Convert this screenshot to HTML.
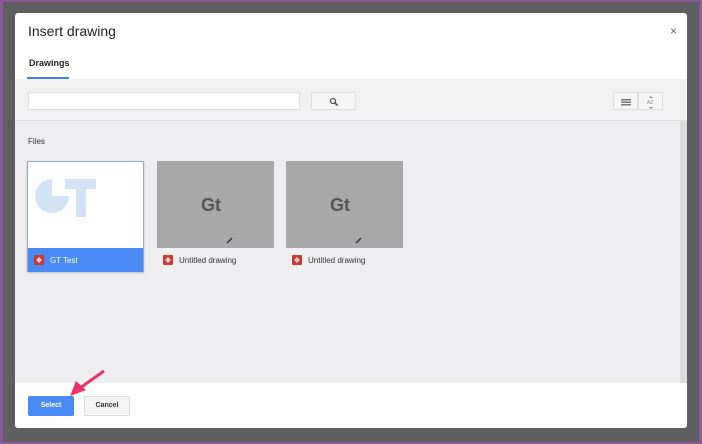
<!DOCTYPE html>
<html><head><style>
*{margin:0;padding:0;box-sizing:border-box}
body{width:702px;height:444px;overflow:hidden;background:#8a5b9a;font-family:"Liberation Sans",Arial,sans-serif;position:relative}
.bg{position:absolute;left:3px;top:2px;width:696px;height:440px;background:#5f5f5f}
.dlg{position:absolute;left:15px;top:13px;width:672px;height:415px;background:#fff;border-radius:3px;overflow:hidden}
.title{position:absolute;left:13px;top:10px;font-size:14px;color:#222}
.x{position:absolute;right:10px;top:11px;font-size:12px;color:#666}
.tab{position:absolute;left:14px;top:45px;font-size:9px;font-weight:bold;color:#222}
.tabline{position:absolute;left:12px;top:64px;width:42px;height:2px;background:#4a7fdc}
.toolbar{position:absolute;left:0;top:66px;width:672px;height:42px;background:#f1f1f1;border-bottom:1px solid #e0e0e0}
.search{position:absolute;left:13px;top:13px;width:272px;height:18px;background:#fff;border:1px solid #ddd;border-radius:2px}
.sbtn{position:absolute;left:296px;top:13px;width:45px;height:18px;background:#f5f5f5;border:1px solid #ddd;border-radius:2px}
.vb{position:absolute;top:13px;width:25px;height:18px;background:#f5f5f5;border:1px solid #ddd}
.content{position:absolute;left:0;top:108px;width:665px;height:262px;background:#eeedf0}
.scroll{position:absolute;left:665px;top:108px;width:7px;height:262px;background:#dcdcdc}
.files{position:absolute;left:13px;top:124px;font-size:8px;color:#333}
.card{position:absolute;top:148px;width:117px;height:111px}
.thumb{position:absolute;left:0;top:0;width:117px;height:87px;background:#a8a8a8}
.lbl{position:absolute;left:0;top:87px;width:117px;height:24px;font-size:8px;color:#333;padding:8px 0 0 22px}
.ic{position:absolute;left:6px;top:7px;width:10px;height:10px;background:#c63a3a;border-radius:1px}
.ic:after{content:"";position:absolute;left:2px;top:2px;width:6px;height:6px;background:#f3c9c9;transform:rotate(45deg) scale(.7)}
.footer{position:absolute;left:0;top:370px;width:672px;height:45px;background:#fff}
.sel{position:absolute;left:13px;top:383px;width:46px;height:20px;background:#4a8af4;color:#fff;font-size:7px;font-weight:bold;text-align:center;line-height:20px;border-radius:2px}
.can{position:absolute;left:69px;top:383px;width:46px;height:20px;background:#f5f5f5;border:1px solid #ddd;color:#333;font-size:7px;font-weight:bold;text-align:center;line-height:18px;border-radius:2px}
</style></head><body>
<div class="bg"></div>
<div class="dlg">
<div class="title">Insert drawing</div>
<div class="x">×</div>
<div class="tab">Drawings</div>
<div class="toolbar">
<div class="search"></div>
<div class="sbtn"><svg width="45" height="18"><circle cx="21" cy="8" r="2.5" fill="none" stroke="#555" stroke-width="1.3"/><line x1="23" y1="10" x2="25.5" y2="12.5" stroke="#555" stroke-width="1.6"/></svg></div>
<div class="vb" style="left:598px"><svg width="25" height="18"><rect x="7" y="6" width="10" height="1.5" fill="#777"/><rect x="7" y="8.5" width="10" height="1.5" fill="#777"/><rect x="7" y="11" width="10" height="1.5" fill="#777"/></svg></div>
<div class="vb" style="left:623px"><svg width="25" height="18"><text x="8" y="11" font-size="5" fill="#888" font-family="Liberation Sans">AZ</text><path d="M12 3l-2 2h4zM12 16l-2-2h4z" fill="#888"/></svg></div>
</div>
<div class="tabline"></div>
<div class="content"></div>
<div class="scroll"></div>
<div class="files">Files</div>
<div class="card" style="left:12px;border:1px solid #9aa8c8;box-shadow:0 1px 2px rgba(0,0,0,.2)">
<div class="thumb" style="background:#fff;width:115px">
<svg width="115" height="87"><path d="M24 17 A17 17 0 1 0 41 34 L24 34 Z" fill="#d4e3f3"/><rect x="37" y="17" width="31" height="10" fill="#d4e3f3"/><rect x="48" y="17" width="10" height="38" fill="#d4e3f3"/></svg>
</div>
<div class="lbl" style="background:#4a8af4;color:#fff;width:115px;top:86px"><div class="ic"></div>GT Test</div>
</div>
<div class="card" style="left:142px"><div class="thumb"><svg width="117" height="87"><text x="44" y="50" font-size="18" font-weight="bold" fill="#555" font-family="Liberation Sans">Gt</text><line x1="70" y1="82" x2="75" y2="77" stroke="#333" stroke-width="1.5"/></svg></div><div class="lbl"><div class="ic"></div>Untitled drawing</div></div>
<div class="card" style="left:271px"><div class="thumb"><svg width="117" height="87"><text x="44" y="50" font-size="18" font-weight="bold" fill="#555" font-family="Liberation Sans">Gt</text><line x1="70" y1="82" x2="75" y2="77" stroke="#333" stroke-width="1.5"/></svg></div><div class="lbl"><div class="ic"></div>Untitled drawing</div></div>
<div class="footer"></div>
<div class="sel">Select</div>
<div class="can">Cancel</div>
</div>
<svg style="position:absolute;left:0;top:0" width="702" height="444"><line x1="104" y1="371" x2="80" y2="388" stroke="#e8336a" stroke-width="3"/><path d="M70 396 L76 381 L86 390 Z" fill="#e8336a"/></svg>
</body></html>
